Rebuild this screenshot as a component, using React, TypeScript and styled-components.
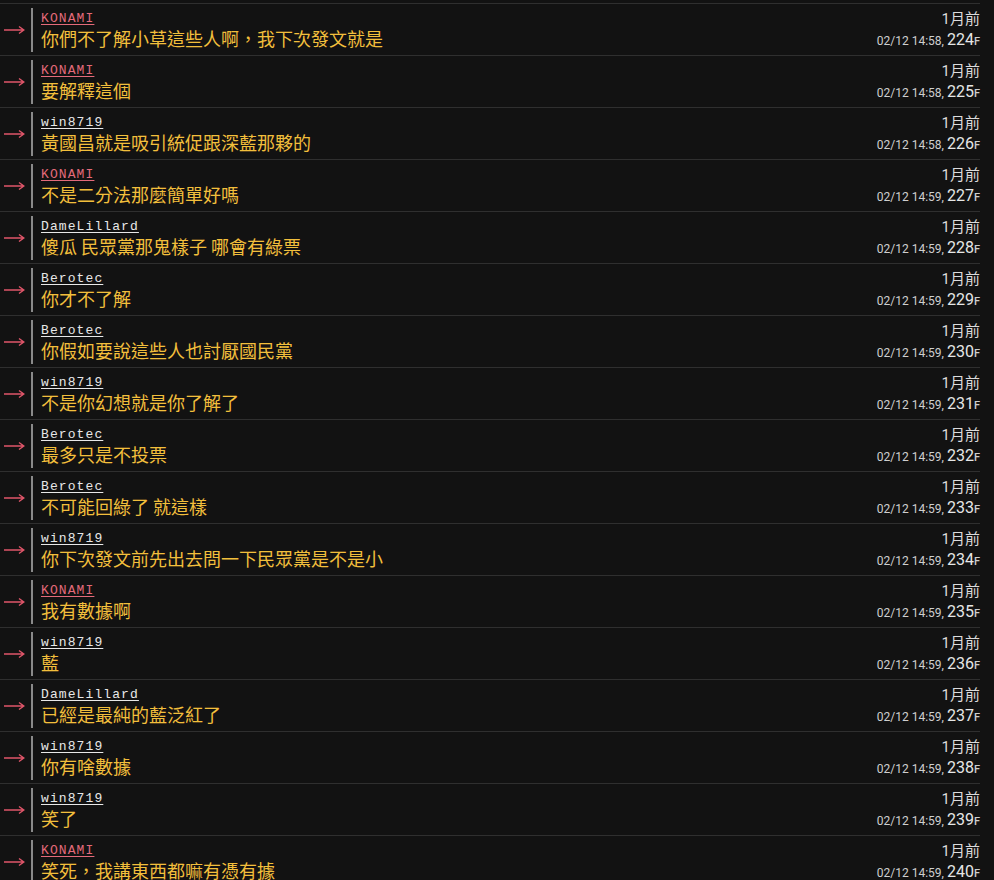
import React from "react";
import styled, { createGlobalStyle } from "styled-components";

const Global = createGlobalStyle`
  html, body { margin: 0; padding: 0; background: #121212; }
  body { font-family: Roboto, "Noto Sans CJK TC", sans-serif; }
`;

const List = styled.div`
  padding-top: 3px;
  width: 980px;
`;

const Row = styled.div`
  display: flex;
  align-items: stretch;
  height: 51px;
  border-top: 1px solid #2f2f2f;
`;

const Arrow = styled.div`
  width: 28px;
  flex: none;
  display: flex;
  align-items: center;
  padding: 1px 0 0 3px;
  svg { display: block; }
`;

const Body = styled.div`
  flex: 1;
  margin: 4px 0 3px;
  border-left: 2px solid #8a8a8a;
  padding-left: 8px;
  display: flex;
  flex-direction: column;
  justify-content: center;
`;

const User = styled.span<{ $red?: boolean }>`
  font-family: "Liberation Mono", monospace;
  font-size: 13px;
  letter-spacing: 1.1px;
  line-height: 16px;
  color: ${(p) => (p.$red ? "#e36a7a" : "#e8e8e8")};
  text-decoration: underline;
  text-underline-offset: 2px;
  align-self: flex-start;
`;

const Text = styled.div`
  font-family: "Noto Sans CJK TC", sans-serif;
  font-size: 18px;
  line-height: 22px;
  color: #f2bf3c;
  margin-bottom: 1px;
`;

const Meta = styled.div`
  flex: none;
  display: flex;
  flex-direction: column;
  align-items: flex-end;
  justify-content: center;
  padding-top: 1px;
  font-family: Roboto, "Noto Sans CJK TC", sans-serif;
  color: #dcdcdc;
`;

const Ago = styled.div`
  font-size: 15px;
  line-height: 21px;
`;

const Stamp = styled.div`
  font-size: 12px;
  line-height: 20px;
  color: #cfcfcf;
`;

const Floor = styled.span`
  font-size: 16px;
  color: #e6e6e6;
`;

const F = styled.span`
  font-size: 11px;
  font-weight: 500;
`;

const data: [string, string, string, number][] = [
  ["KONAMI", "你們不了解小草這些人啊，我下次發文就是", "14:58", 224],
  ["KONAMI", "要解釋這個", "14:58", 225],
  ["win8719", "黃國昌就是吸引統促跟深藍那夥的", "14:58", 226],
  ["KONAMI", "不是二分法那麼簡單好嗎", "14:59", 227],
  ["DameLillard", "傻瓜 民眾黨那鬼樣子 哪會有綠票", "14:59", 228],
  ["Berotec", "你才不了解", "14:59", 229],
  ["Berotec", "你假如要說這些人也討厭國民黨", "14:59", 230],
  ["win8719", "不是你幻想就是你了解了", "14:59", 231],
  ["Berotec", "最多只是不投票", "14:59", 232],
  ["Berotec", "不可能回綠了 就這樣", "14:59", 233],
  ["win8719", "你下次發文前先出去問一下民眾黨是不是小", "14:59", 234],
  ["KONAMI", "我有數據啊", "14:59", 235],
  ["win8719", "藍", "14:59", 236],
  ["DameLillard", "已經是最純的藍泛紅了", "14:59", 237],
  ["win8719", "你有啥數據", "14:59", 238],
  ["win8719", "笑了", "14:59", 239],
  ["KONAMI", "笑死，我講東西都嘛有憑有據", "14:59", 240],
];

const ArrowIcon = () => (
  <svg width="22" height="10" viewBox="0 0 22 10">
    <path d="M1 5H20.5M16 1.5L20.8 5L16 8.5" stroke="#e0566a" strokeWidth="1.4" fill="none" />
  </svg>
);

export default function App() {
  return (
    <>
      <Global />
      <List>
        {data.map(([u, t, time, n]) => (
          <Row key={n}>
            <Arrow>
              <ArrowIcon />
            </Arrow>
            <Body>
              <User $red={u === "KONAMI"}>{u}</User>
              <Text>{t}</Text>
            </Body>
            <Meta>
              <Ago>1月前</Ago>
              <Stamp>
                02/12 {time}, <Floor>{n}</Floor>
                <F>F</F>
              </Stamp>
            </Meta>
          </Row>
        ))}
      </List>
    </>
  );
}
